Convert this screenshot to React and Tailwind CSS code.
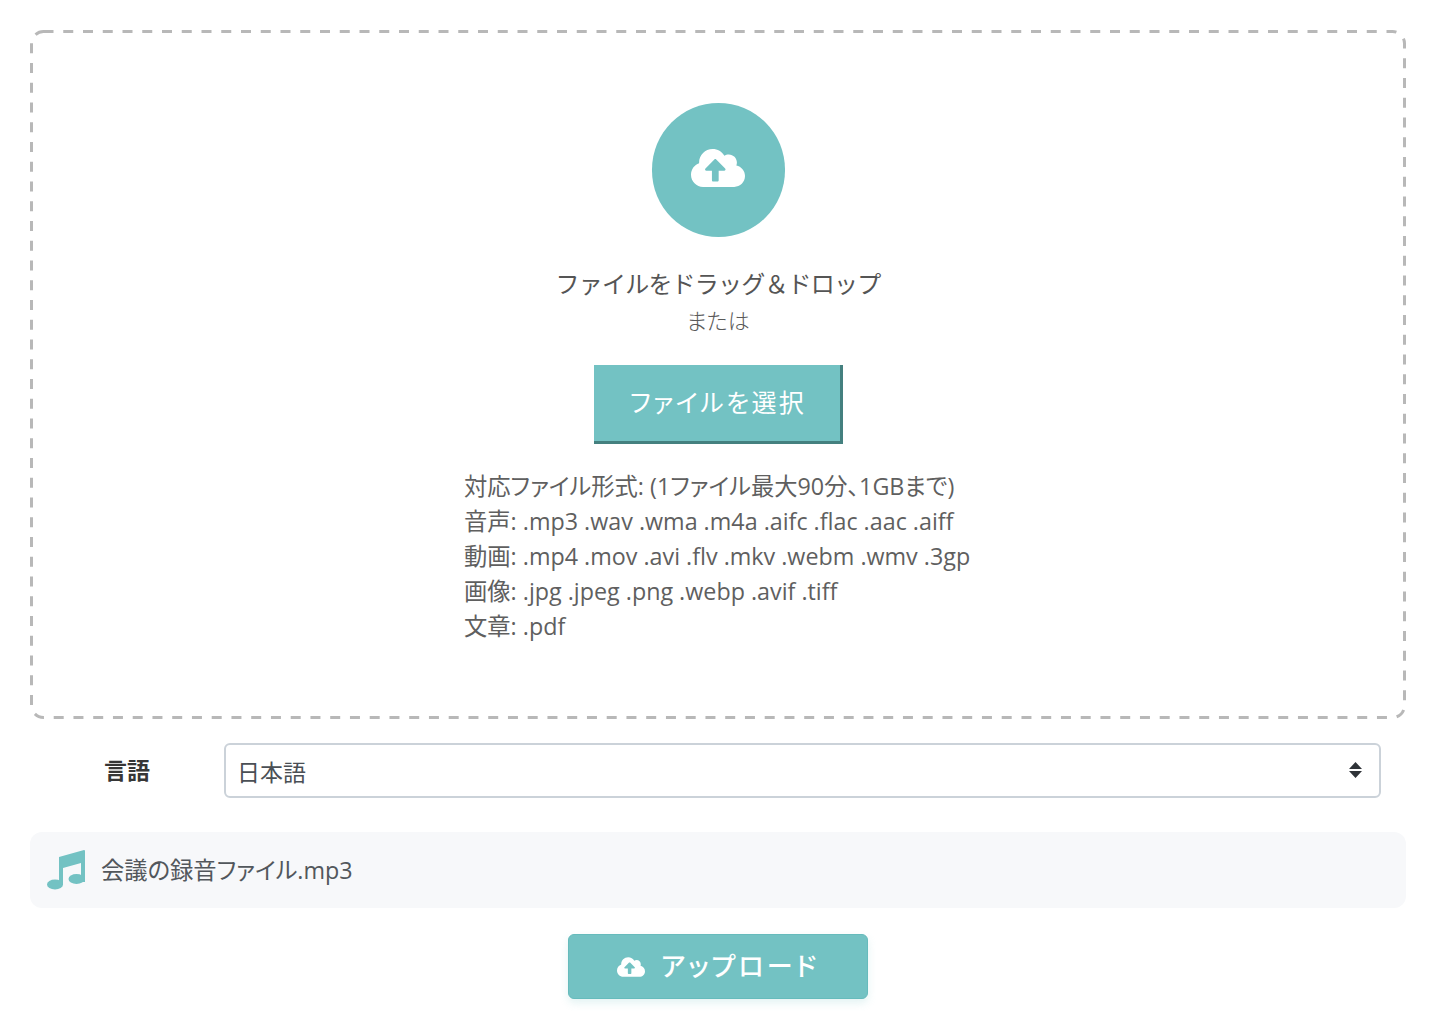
import React from "react";
import { FaCloudUploadAlt } from "react-icons/fa";

export default function App() {
  return (
    <div className="w-[1440px] h-[1031px] bg-white px-[30px] pt-[30px] overflow-hidden text-[#4a4a4a] font-['Open_Sans','Noto_Sans_CJK_JP',sans-serif] [font-feature-settings:'palt']">
      <div className="relative w-[1376px] h-[689px] flex flex-col items-center pt-[73px]">
        <svg className="absolute left-0 top-0 w-[1376px] h-[689px] pointer-events-none" viewBox="0 0 1376 689" fill="none">
          <rect x="1.5" y="1.5" width="1373" height="686" rx="12" stroke="#b8b8b8" strokeWidth="3" strokeDasharray="10 9.75" />
        </svg>
        <div className="w-[133.5px] h-[133.5px] ml-[0.5px] rounded-full bg-[#73c2c3] flex items-center justify-center">
          <FaCloudUploadAlt className="text-white w-[54px] h-[54px] mb-[4px]" />
        </div>
        <p className="mt-[29px] text-[24px] leading-[36px] tracking-[-0.8px] text-[#555555] [font-feature-settings:normal]">ファイルをドラッグ＆ドロップ</p>
        <p className="mt-[2px] text-[22px] leading-[32px] font-light text-[#5a5a5a]">または</p>
        <button className="mt-[29px] w-[249px] h-[79px] bg-[#73c2c3] border-r-[3px] border-b-[3px] border-[#44807f] text-white text-[25px] tracking-[2.4px] pl-[3px] flex items-center justify-center">
          ファイルを選択
        </button>
        <div className="mt-[25px] w-[508px] text-[23.3px] leading-[35.2px] text-[#5f5f5f]">
          <p>対応ファイル形式: (1ファイル最大90分、1GBまで)</p>
          <p>音声: .mp3 .wav .wma .m4a .aifc .flac .aac .aiff</p>
          <p>動画: .mp4 .mov .avi .flv .mkv .webm .wmv .3gp</p>
          <p>画像: .jpg .jpeg .png .webp .avif .tiff</p>
          <p>文章: .pdf</p>
        </div>
      </div>

      <div className="mt-[23px] flex items-center h-[56px]">
        <label className="w-[194px] text-center text-[23px] font-bold text-[#363636]">言語</label>
        <div className="relative w-[1157px] h-[55px]">
          <select className="appearance-none w-full h-full bg-white border-2 border-[#cbd2d9] rounded-[6px] pl-[11px] pt-[4px] text-[23px] text-[#4a4f55] outline-none">
            <option>日本語</option>
          </select>
          <svg className="absolute right-[19px] top-[19px] w-[13px] h-[16px] pointer-events-none" viewBox="0 0 13 16">
            <path d="M6.5 0 L13 7 H0 Z M0 9 H13 L6.5 16 Z" fill="#2f3338" />
          </svg>
        </div>
      </div>

      <div className="mt-[34px] w-[1376px] h-[76px] bg-[#f7f8fa] rounded-[12px] flex items-center pl-[17px]">
        <svg className="w-[38px] h-[40px] shrink-0" viewBox="0 0 38 40" fill="#73c2c3">
          <path d="M12 7 L37 0 Q38 0 38 1 V32 H34 V13 L16 18 V35 H12 Z" />
          <ellipse cx="8" cy="34.5" rx="8" ry="5" />
          <ellipse cx="29.5" cy="29" rx="8" ry="5" />
        </svg>
        <span className="ml-[16px] text-[23.3px] text-[#52575c]">会議の録音ファイル.mp3</span>
      </div>

      <div className="mt-[26px] w-[1376px] flex justify-center">
        <button className="w-[300px] h-[65px] bg-[#73c2c3] border border-[#66bbbc] rounded-[6px] shadow-[0_4px_8px_rgba(115,194,195,0.2)] flex items-center justify-center gap-[16px] text-white text-[26px] font-medium tracking-[3px]">
          <FaCloudUploadAlt className="w-[28px] h-[28px]" />
          <span>アップロード</span>
        </button>
      </div>
    </div>
  );
}
